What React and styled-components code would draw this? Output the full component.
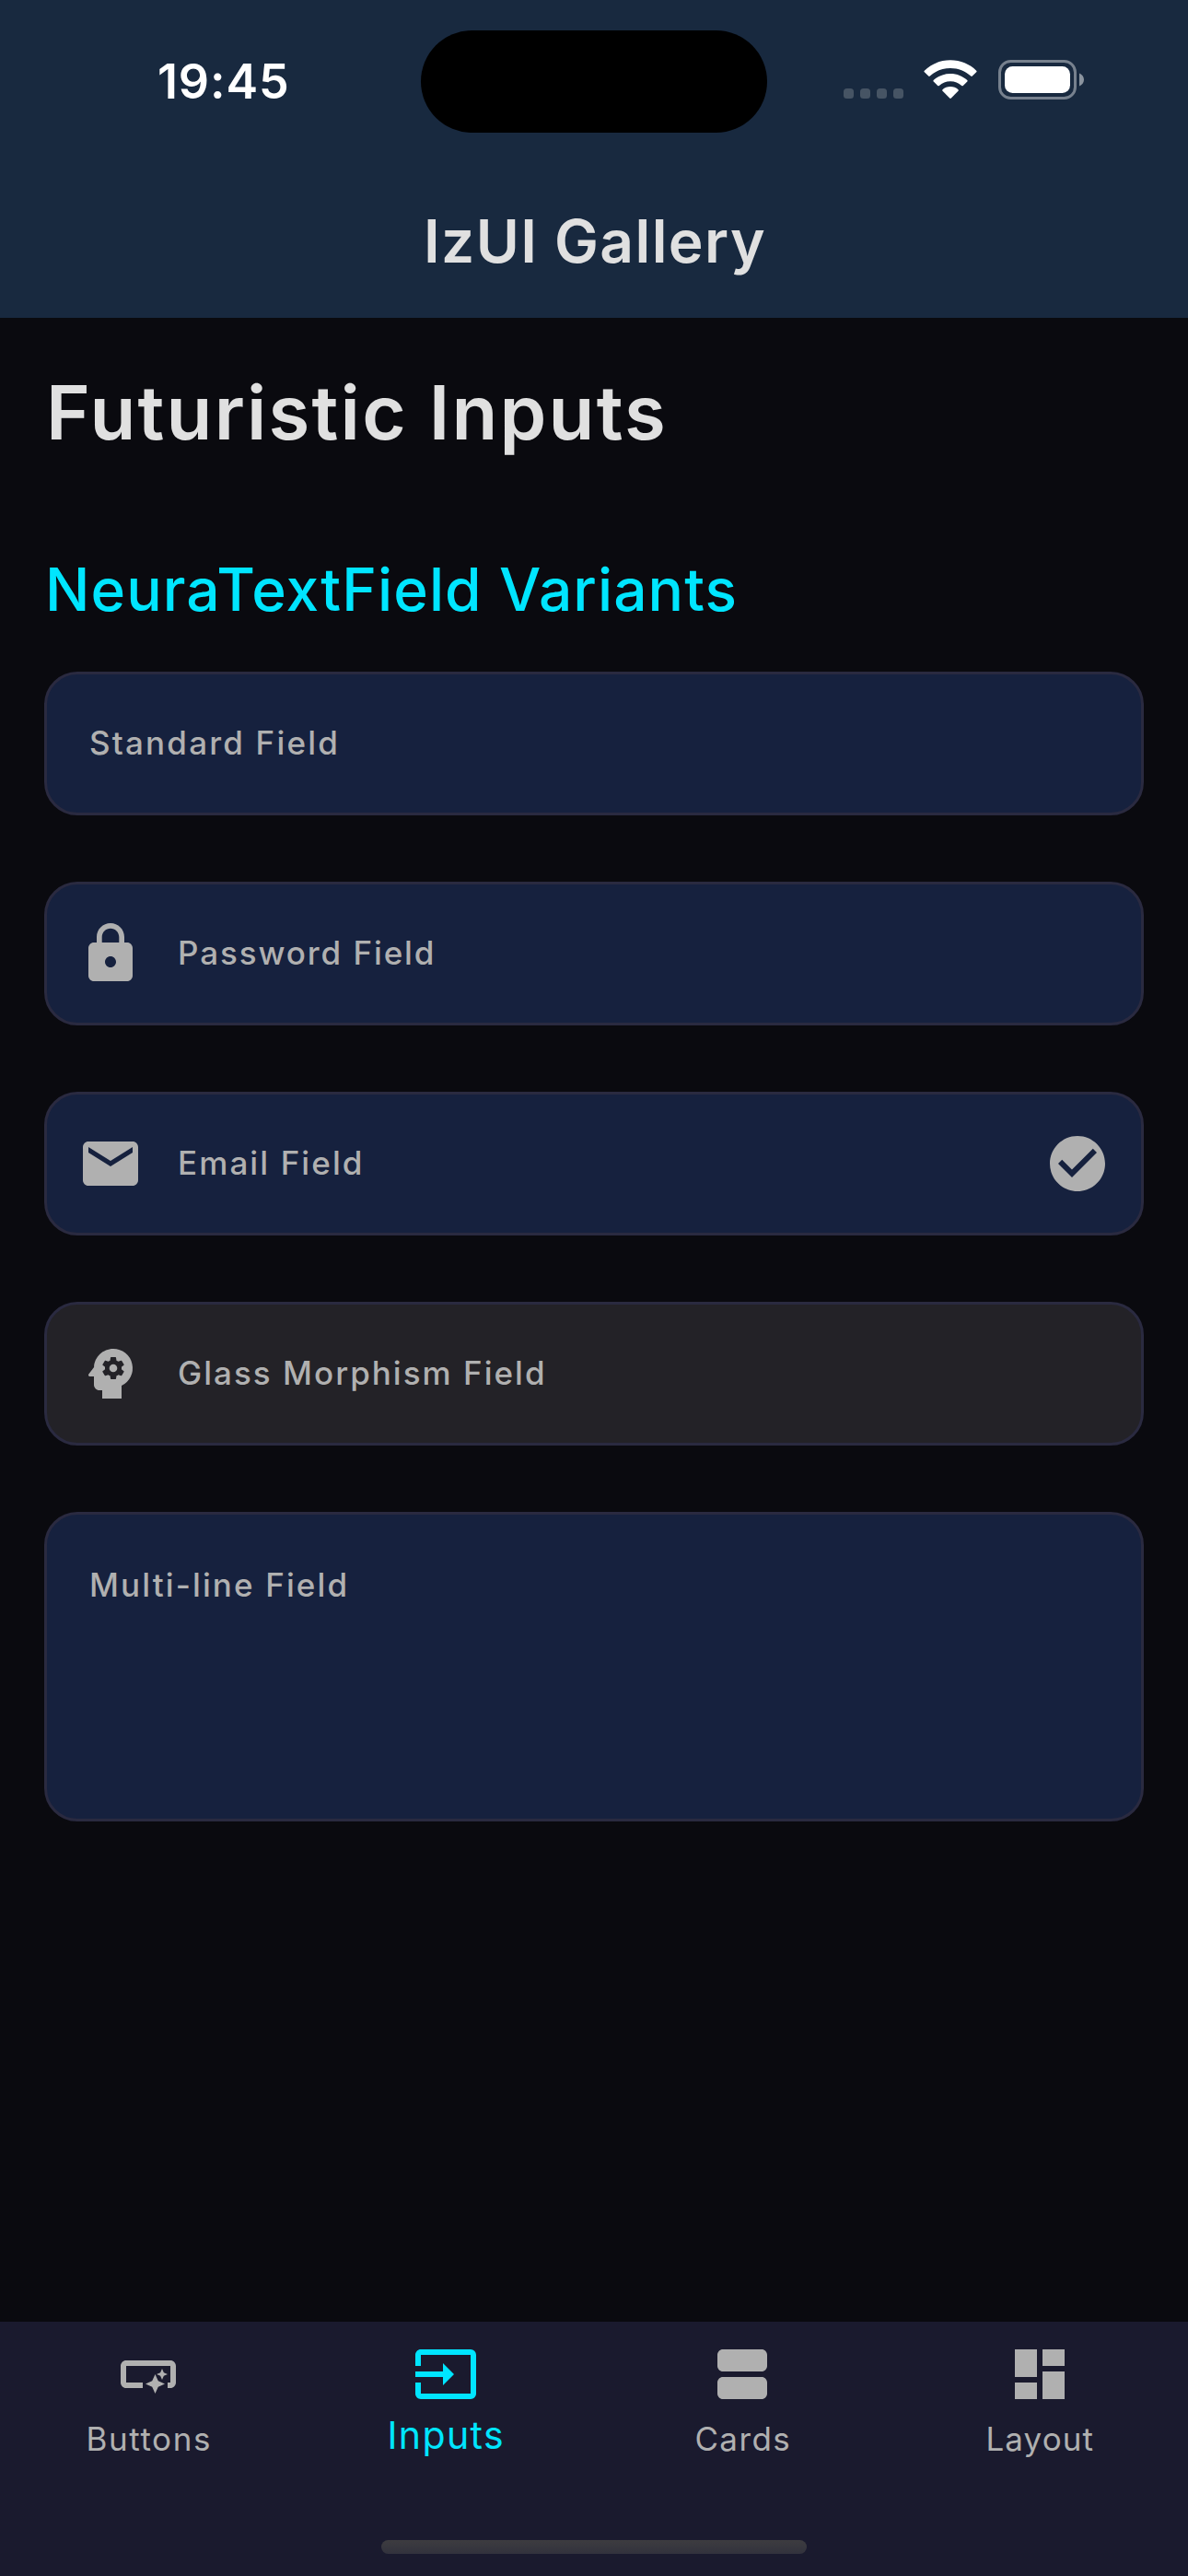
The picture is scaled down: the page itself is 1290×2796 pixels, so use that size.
import React from "react";
import styled, { createGlobalStyle } from "styled-components";
import {
  MdLock,
  MdEmail,
  MdCheckCircle,
  MdPsychology,
  MdSmartButton,
  MdInput,
  MdDashboard,
  MdViewAgenda,
} from "react-icons/md";

const color = {
  background: "#0a0a0f",
  header: "#18293f",
  field: "#16213e",
  glass: "#232227",
  border: "#2a2a40",
  nav: "#1a1a2e",
  text: "#e0e0e0",
  muted: "#b0b0b0",
  accent: "#00e5ff",
};

const GlobalStyle = createGlobalStyle`
  *, *::before, *::after { box-sizing: border-box; }
  body {
    margin: 0;
    background: ${color.background};
    font-family: Inter, "Liberation Sans", sans-serif;
  }
`;

const Screen = styled.div`
  display: flex;
  flex-direction: column;
  width: 1290px;
  height: 2796px;
  overflow: hidden;
  background: ${color.background};
`;

const Header = styled.header`
  flex: none;
  height: 345px;
  background: ${color.header};
`;

const StatusBar = styled.div`
  display: grid;
  grid-template-columns: 457px 376px 457px;
  height: 177px;
`;

const Clock = styled.time`
  padding: 63px 0 0 171px;
  font-size: 52px;
  line-height: 52px;
  font-weight: 600;
  letter-spacing: 0.88px;
  color: #fff;
`;

const Island = styled.div`
  height: 111px;
  margin-top: 33px;
  border-radius: 56px;
  background: #000;
`;

const StatusIcons = styled.div`
  display: flex;
  padding: 65px 0 0 83px;
`;

const SignalDots = styled.div`
  display: flex;
  gap: 7px;
  margin-top: 31px;
`;

const Dot = styled.span`
  width: 11px;
  height: 11px;
  border-radius: 3.5px;
  background: #465464;
`;

const Wifi = styled.svg`
  width: 58px;
  height: 43px;
  margin-left: 22px;
`;

const Battery = styled.svg`
  width: 94px;
  height: 43px;
  margin-left: 23px;
`;

const Title = styled.h1`
  margin: 0;
  padding-left: 2px;
  font-size: 64px;
  line-height: 169px;
  font-weight: 600;
  letter-spacing: 1.42px;
  text-align: center;
  color: ${color.text};
`;

const Content = styled.main`
  flex: 1;
  display: flex;
  flex-direction: column;
  padding: 49px 48px 48px;
`;

const PageHeading = styled.h2`
  margin: 0 0 96px 2px;
  font-size: 81.5px;
  line-height: 108px;
  font-weight: 600;
  letter-spacing: 2.23px;
  color: ${color.text};
`;

const SectionHeading = styled.h3`
  margin: 0 0 47px 1px;
  font-size: 64px;
  line-height: 84px;
  font-weight: 500;
  letter-spacing: 1.08px;
  color: ${color.accent};
`;

const FieldList = styled.div`
  display: flex;
  flex-direction: column;
  gap: 72px;
`;

const Field = styled.label`
  display: flex;
  align-items: ${(p) => (p.$multiline ? "flex-start" : "center")};
  height: ${(p) => (p.$multiline ? 336 : 156)}px;
  padding: ${(p) => (p.$multiline ? "52px" : "0")} 33px 0
    ${(p) => (p.$icon ? 33 : 46)}px;
  border: 3px solid ${color.border};
  border-radius: 36px;
  background: ${(p) => (p.$glass ? color.glass : color.field)};
  color: ${color.muted};

  svg {
    flex: none;
    width: 72px;
    height: 72px;
  }
`;

const FieldLabel = styled.span`
  flex: 1;
  margin-left: ${(p) => (p.$icon ? 37 : 0)}px;
  padding-bottom: 2px;
  font-size: 35px;
  line-height: 48px;
  font-weight: 500;
  letter-spacing: ${(p) => p.$tracking}px;
`;

const NavBar = styled.nav`
  flex: none;
  display: flex;
  flex-direction: column;
  justify-content: space-between;
  height: 276px;
  padding-bottom: 24px;
  background: ${color.nav};
`;

const NavItems = styled.div`
  display: grid;
  grid-template-columns: repeat(4, 1fr);
`;

const NavItem = styled.a`
  display: flex;
  flex-direction: column;
  align-items: center;
  padding-top: 21px;
  color: ${(p) => (p.$active ? color.accent : color.muted)};

  svg {
    width: 72px;
    height: 72px;
  }
`;

const NavLabel = styled.span`
  margin-top: ${(p) => (p.$active ? 6 : 10)}px;
  padding-left: 1px;
  font-size: ${(p) => (p.$active ? 41 : 35)}px;
  line-height: 48px;
  letter-spacing: ${(p) => p.$tracking}px;
`;

const HomeIndicator = styled.div`
  align-self: center;
  width: 462px;
  height: 15px;
  border-radius: 8px;
  background: linear-gradient(#3d3c40, #32323d);
`;

const fields = [
  { label: "Standard Field", tracking: 2.18 },
  { label: "Password Field", tracking: 1.9, Icon: MdLock },
  { label: "Email Field", tracking: 2.1, Icon: MdEmail, Trailing: MdCheckCircle },
  { label: "Glass Morphism Field", tracking: 2.02, Icon: MdPsychology, glass: true },
  { label: "Multi-line Field", tracking: 2.12, multiline: true },
];

const tabs = [
  { label: "Buttons", tracking: 1.6, Icon: MdSmartButton },
  { label: "Inputs", tracking: 1.4, Icon: MdInput, active: true },
  { label: "Cards", tracking: 1.4, Icon: MdViewAgenda },
  { label: "Layout", tracking: 1.1, Icon: MdDashboard },
];

export default function App() {
  return (
    <Screen>
      <GlobalStyle />
      <Header>
        <StatusBar>
          <Clock>19:45</Clock>
          <Island />
          <StatusIcons>
            <SignalDots>
              <Dot />
              <Dot />
              <Dot />
              <Dot />
            </SignalDots>
            <Wifi viewBox="0 0 58 43" fill="#fff">
              <path d="M29 .300C18 .300 8 4.500 .8 11.700Q0 12.500 .8 13.300L5.200 17.600Q6 18.300 6.800 17.600C12.700 12 20.400 8.900 29 8.900S45.300 12 51.200 17.600Q52 18.300 52.800 17.600L57.200 13.300Q58 12.500 57.200 11.700C50 4.500 40 .300 29 .300Z" />
              <path d="M29 14.900C21.800 14.900 15.500 17.600 10.700 22Q10 22.800 10.700 23.600L15.200 28Q16 28.700 16.800 28C20.100 25 24.300 23.300 29 23.300S37.900 25 41.200 28Q42 28.700 42.800 28L47.300 23.600Q48 22.800 47.300 22C42.500 17.600 36.200 14.900 29 14.900Z" />
              <path d="M29 29C25.700 29 22.800 30.200 20.500 32.200Q19.800 33 20.500 33.800L28.200 41.600Q29 42.400 29.800 41.600L37.500 33.800Q38.200 33 37.500 32.200C35.200 30.200 32.300 29 29 29Z" />
            </Wifi>
            <Battery viewBox="0 0 94 43">
              <rect x="1.500" y="1.500" width="82" height="40" rx="12" fill="none" stroke="#77818e" strokeWidth="3" />
              <rect x="7" y="7" width="71" height="29" rx="8.500" fill="#fff" />
              <path d="M88 14.500C91 15.700 93 18.300 93 21.500S91 27.300 88 28.500Z" fill="#8b949f" />
            </Battery>
          </StatusIcons>
        </StatusBar>
        <Title>IzUI Gallery</Title>
      </Header>

      <Content>
        <PageHeading>Futuristic Inputs</PageHeading>
        <SectionHeading>NeuraTextField Variants</SectionHeading>
        <FieldList>
          {fields.map(({ label, tracking, Icon, Trailing, glass, multiline }) => (
            <Field key={label} $icon={!!Icon} $glass={glass} $multiline={multiline}>
              {Icon && <Icon />}
              <FieldLabel $icon={!!Icon} $tracking={tracking}>{label}</FieldLabel>
              {Trailing && <Trailing />}
            </Field>
          ))}
        </FieldList>
      </Content>

      <NavBar>
        <NavItems>
          {tabs.map(({ label, tracking, Icon, active }) => (
            <NavItem key={label} $active={active}>
              <Icon />
              <NavLabel $active={active} $tracking={tracking}>{label}</NavLabel>
            </NavItem>
          ))}
        </NavItems>
        <HomeIndicator />
      </NavBar>
    </Screen>
  );
}
